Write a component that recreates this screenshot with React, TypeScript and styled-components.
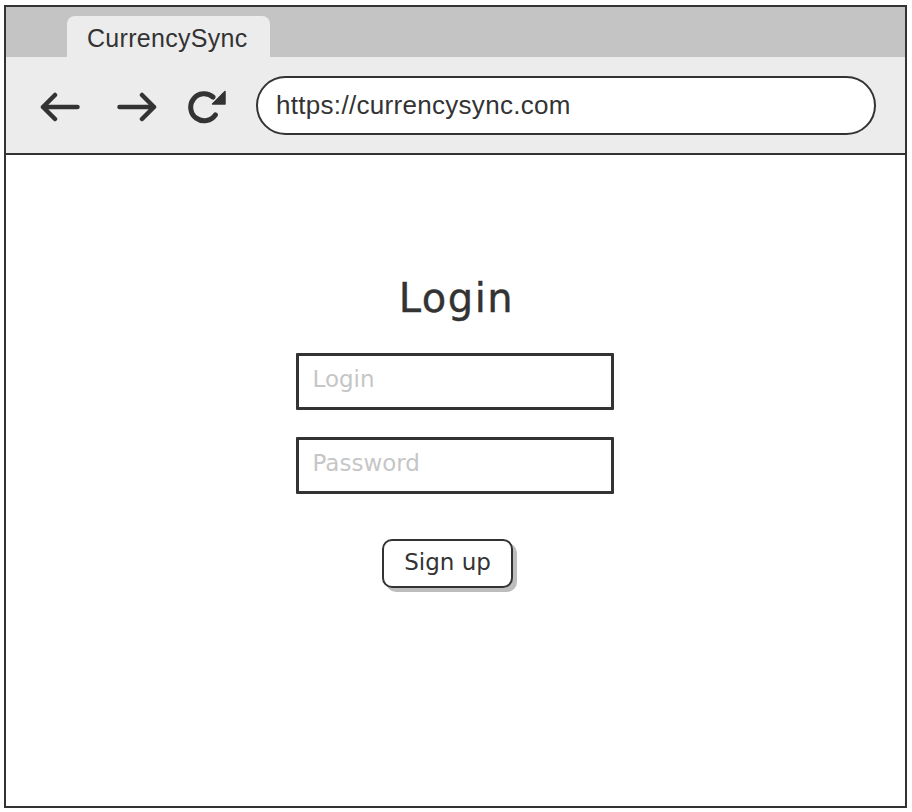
import React from "react";
import styled, { createGlobalStyle } from "styled-components";

const GlobalStyle = createGlobalStyle`
	html, body {
		margin: 0;
		padding: 0;
		background: #ffffff;
	}
`;

const ink = "#333333";

const BackIcon = () => (
	<svg width="40" height="30" viewBox="0 0 40 30" fill="none">
		<path d="M37.5 15H3M15 3L3 15l12 12" stroke={ink} strokeWidth="4.5" strokeLinecap="round" strokeLinejoin="round" />
	</svg>
);

const ForwardIcon = () => (
	<svg width="40" height="30" viewBox="0 0 40 30" fill="none">
		<path d="M2.5 15H37M25 3l12 12-12 12" stroke={ink} strokeWidth="4.5" strokeLinecap="round" strokeLinejoin="round" />
	</svg>
);

const ReloadIcon = () => (
	<svg width="38" height="34" viewBox="0 0 38 34" fill="none">
		<path d="M25 7A13.5 13.5 0 1 0 27.4 24.8" stroke={ink} strokeWidth="5" strokeLinecap="round" />
		<path d="M24.5 14L37 1.5V14z" fill={ink} stroke={ink} strokeWidth="1.5" strokeLinejoin="round" />
	</svg>
);

const App = () => {
	return (
		<>
			<GlobalStyle />
			<Page>
				<Window>
					<TabStrip>
						<Tab>CurrencySync</Tab>
					</TabStrip>
					<Toolbar>
						<NavButton $gap={37}>
							<BackIcon />
						</NavButton>
						<NavButton $gap={31}>
							<ForwardIcon />
						</NavButton>
						<NavButton $gap={30}>
							<ReloadIcon />
						</NavButton>
						<AddressBar>https://currencysync.com</AddressBar>
					</Toolbar>
					<Content>
						<Title>Login</Title>
						<Field>
							<Placeholder>Login</Placeholder>
						</Field>
						<Field>
							<Placeholder>Password</Placeholder>
						</Field>
						<SignUp>Sign up</SignUp>
					</Content>
				</Window>
			</Page>
		</>
	);
};

export default App;

const Page = styled.div`
	padding: 5px 4px;
	width: 904px;
	height: 802px;
`;

const Window = styled.div`
	display: flex;
	flex-direction: column;
	box-sizing: border-box;
	width: 903px;
	height: 803px;
	border: 2px solid ${ink};
	background: #ffffff;
`;

const TabStrip = styled.div`
	display: flex;
	align-items: flex-end;
	height: 50px;
	padding-left: 61px;
	background: #c4c4c4;
`;

const Tab = styled.div`
	display: flex;
	align-items: center;
	box-sizing: border-box;
	width: 203px;
	height: 41px;
	padding: 3px 0 0 20px;
	border-radius: 8px 8px 0 0;
	background: #ececec;
	color: ${ink};
	font-family: "Liberation Sans", Arial, sans-serif;
	font-size: 25px;
	letter-spacing: 0.3px;
`;

const Toolbar = styled.div`
	display: flex;
	align-items: center;
	height: 96px;
	padding-left: 34px;
	background: #ececec;
	border-bottom: 2px solid ${ink};
`;

const NavButton = styled.div<{ $gap: number }>`
	display: flex;
	align-items: center;
	margin-top: 3px;
	margin-right: ${(p) => p.$gap}px;
`;

const AddressBar = styled.div`
	display: flex;
	align-items: center;
	box-sizing: border-box;
	width: 620px;
	height: 59px;
	padding: 1px 0 0 18px;
	border: 2px solid ${ink};
	border-radius: 30px;
	background: #ffffff;
	color: ${ink};
	font-family: "Liberation Sans", Arial, sans-serif;
	font-size: 26px;
	letter-spacing: 0.3px;
`;

const Content = styled.div`
	display: flex;
	flex-direction: column;
	align-items: center;
	flex: 1;
	padding-top: 119px;
`;

const Title = styled.h1`
	margin: 0 0 31px 2px;
	color: ${ink};
	font-family: "DejaVu Sans", Verdana, sans-serif;
	font-size: 40px;
	font-weight: 400;
	line-height: 48px;
	letter-spacing: 1.5px;
	-webkit-text-stroke: 0.4px ${ink};
`;

const Field = styled.div`
	display: flex;
	align-items: center;
	box-sizing: border-box;
	width: 318px;
	height: 57px;
	margin: 0 2px 27px 0;
	padding: 0 0 5px 14px;
	border: 3px solid ${ink};
	border-radius: 1px;
	background: #ffffff;

	&:last-of-type {
		margin-bottom: 0;
	}
`;

const Placeholder = styled.span`
	color: #c6c6c6;
	font-family: "DejaVu Sans", Verdana, sans-serif;
	font-size: 23px;
`;

const SignUp = styled.button`
	box-sizing: border-box;
	width: 131px;
	height: 49px;
	margin: 45px 16px 0 0;
	padding: 0 0 4px;
	border: 2px solid ${ink};
	border-radius: 10px;
	background: #ffffff;
	box-shadow: 4px 4px 0 #bdbdbd;
	color: ${ink};
	font-family: "DejaVu Sans", Verdana, sans-serif;
	font-size: 23px;
	cursor: pointer;
`;
